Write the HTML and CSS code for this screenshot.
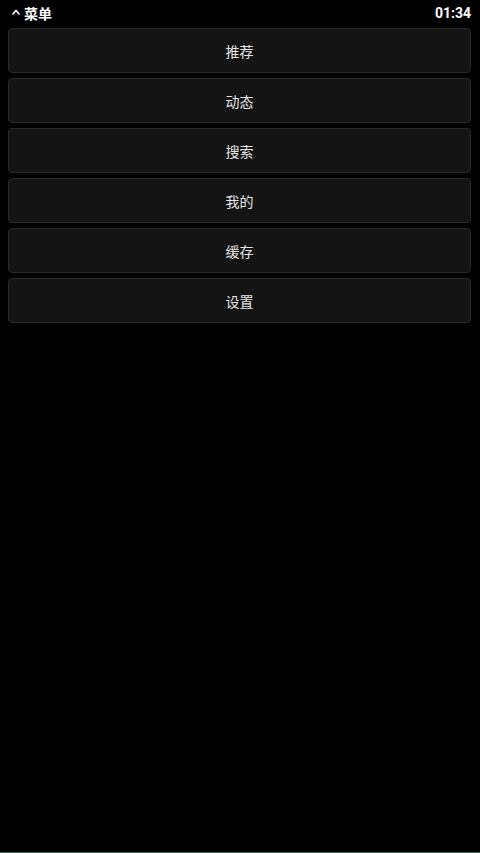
FILE: index.html
```html
<!DOCTYPE html>
<html lang="zh">
<head>
<meta charset="utf-8">
<link rel="stylesheet" href="styles.css">
</head>
<body>
<div class="screen">
  <div class="status">
    <div class="title">
      <svg class="caret" width="8" height="6" viewBox="0 0 8 6"><path d="M1 5 L4 1.5 L7 5" fill="none" stroke="#fff" stroke-width="1.6" stroke-linecap="round" stroke-linejoin="round"/></svg>
      <span>菜单</span>
    </div>
    <div class="time">01:34</div>
  </div>
  <div class="menu">
    <div class="item">推荐</div>
    <div class="item">动态</div>
    <div class="item">搜索</div>
    <div class="item">我的</div>
    <div class="item">缓存</div>
    <div class="item">设置</div>
  </div>
  <div class="spacer"></div>
  <div class="bottom-line"></div>
</div>
</body>
</html>
```
FILE: styles.css
```css
html, body {
  margin: 0;
  padding: 0;
  background: #000;
}
.screen {
  width: 480px;
  height: 853px;
  display: flex;
  flex-direction: column;
  font-family: Roboto, "Noto Sans CJK SC", sans-serif;
  color: #fff;
}
.status {
  height: 28px;
  display: flex;
  align-items: center;
  justify-content: space-between;
  padding: 0 9px 3px 12px;
  box-sizing: border-box;
}
.title {
  display: flex;
  align-items: center;
  gap: 4px;
  font-size: 14px;
  font-weight: 700;
}
.caret {
  display: block;
  margin-top: -1px;
}
.time {
  font-size: 14px;
  font-weight: 700;
}
.menu {
  display: flex;
  flex-direction: column;
  gap: 5px;
  padding: 0 9px 0 8px;
}
.item {
  height: 45px;
  box-sizing: border-box;
  background: #141414;
  border: 1px solid #2a2a2a;
  border-radius: 4px;
  display: flex;
  align-items: center;
  justify-content: center;
  font-size: 14px;
  color: #e6e6e6;
}
.spacer {
  flex: 1;
}
.bottom-line {
  height: 1px;
  background: #2f6b5c;
}
```
